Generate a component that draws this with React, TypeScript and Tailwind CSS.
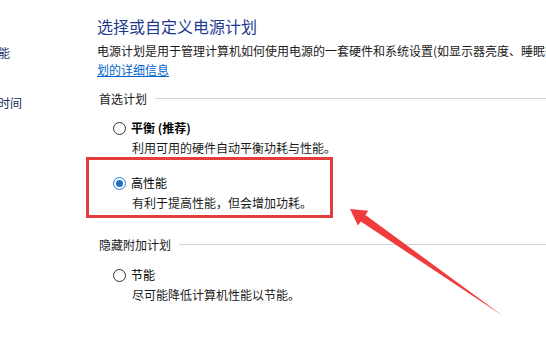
import React from "react";

const font = { fontFamily: '"Noto Sans CJK SC", "Noto Sans", sans-serif' };

function Radio({ checked }: { checked?: boolean }) {
  if (checked) {
    return (
      <span className="flex h-[13px] w-[13px] shrink-0 items-center justify-center rounded-full border border-[#2a7ad0] bg-white">
        <span className="h-[7px] w-[7px] rounded-full bg-[#1c6fc4]" />
      </span>
    );
  }
  return <span className="h-[13px] w-[13px] shrink-0 rounded-full border border-[#333]" />;
}

function GroupHeader({ title }: { title: string }) {
  return (
    <div className="flex items-center gap-[8px] pl-[2px] text-[12px] leading-[19px] text-[#1a1a1a]">
      <span>{title}</span>
      <span className="h-px flex-1 bg-[#d4d4d4]" />
    </div>
  );
}

function Plan({ name, desc, checked, bold, className }: {
  name: string;
  desc: string;
  checked?: boolean;
  bold?: boolean;
  className?: string;
}) {
  return (
    <div className={className}>
      <div className="flex h-[20px] items-center gap-[5px] pl-[16px]">
        <Radio checked={checked} />
        <span className={`text-[12px] leading-[20px] text-black ${bold ? "font-bold" : ""}`}>{name}</span>
      </div>
      <div className="pl-[35px] text-[12px] leading-[20px] text-[#1a1a1a]">{desc}</div>
    </div>
  );
}

export default function App() {
  return (
    <div className="relative flex h-[352px] w-[546px] overflow-hidden bg-white" style={font}>
      {/* left pane, cut off by the screenshot */}
      <div className="ml-[-98px] w-[195px] shrink-0 pt-[43px] text-[12px] leading-[19px] text-[#1a2b5c] whitespace-nowrap">
        <div>选择电源按钮的功能</div>
        <div className="mt-[31px]">选择关闭显示器的时间</div>
      </div>

      <div className="min-w-0 flex-1 overflow-hidden pt-[14px]">
        <h1 className="text-[16px] leading-[24px] font-normal text-[#1e3a8f]">选择或自定义电源计划</h1>
        <div className="mt-[3px] text-[12px] leading-[19px] text-[#1a1a1a]">
          <div className="whitespace-nowrap">电源计划是用于管理计算机如何使用电源的一套硬件和系统设置(如显示器亮度、睡眠等)。</div>
          <a className="text-[#0066cc] underline">划的详细信息</a>
        </div>

        <div className="mt-[10px]">
          <GroupHeader title="首选计划" />
        </div>
        <Plan className="mt-[10px]" name="平衡 (推荐)" bold desc="利用可用的硬件自动平衡功耗与性能。" />
        <Plan className="mt-[15px]" name="高性能" checked desc="有利于提高性能，但会增加功耗。" />

        <div className="mt-[22px]">
          <GroupHeader title="隐藏附加计划" />
        </div>
        <Plan className="mt-[11px]" name="节能" desc="尽可能降低计算机性能以节能。" />
      </div>

      {/* red annotation */}
      <div className="absolute left-[86px] top-[157px] h-[61px] w-[247px] border-[3px] border-[#e53d3d]" />
      <svg className="absolute left-0 top-0" width="546" height="352" viewBox="0 0 546 352">
        <polygon
          points="350,209 368.3,210.8 365.4,214.9 503,316 360.8,221.5 357.9,225.6"
          fill="#f03c3c"
        />
      </svg>
    </div>
  );
}
